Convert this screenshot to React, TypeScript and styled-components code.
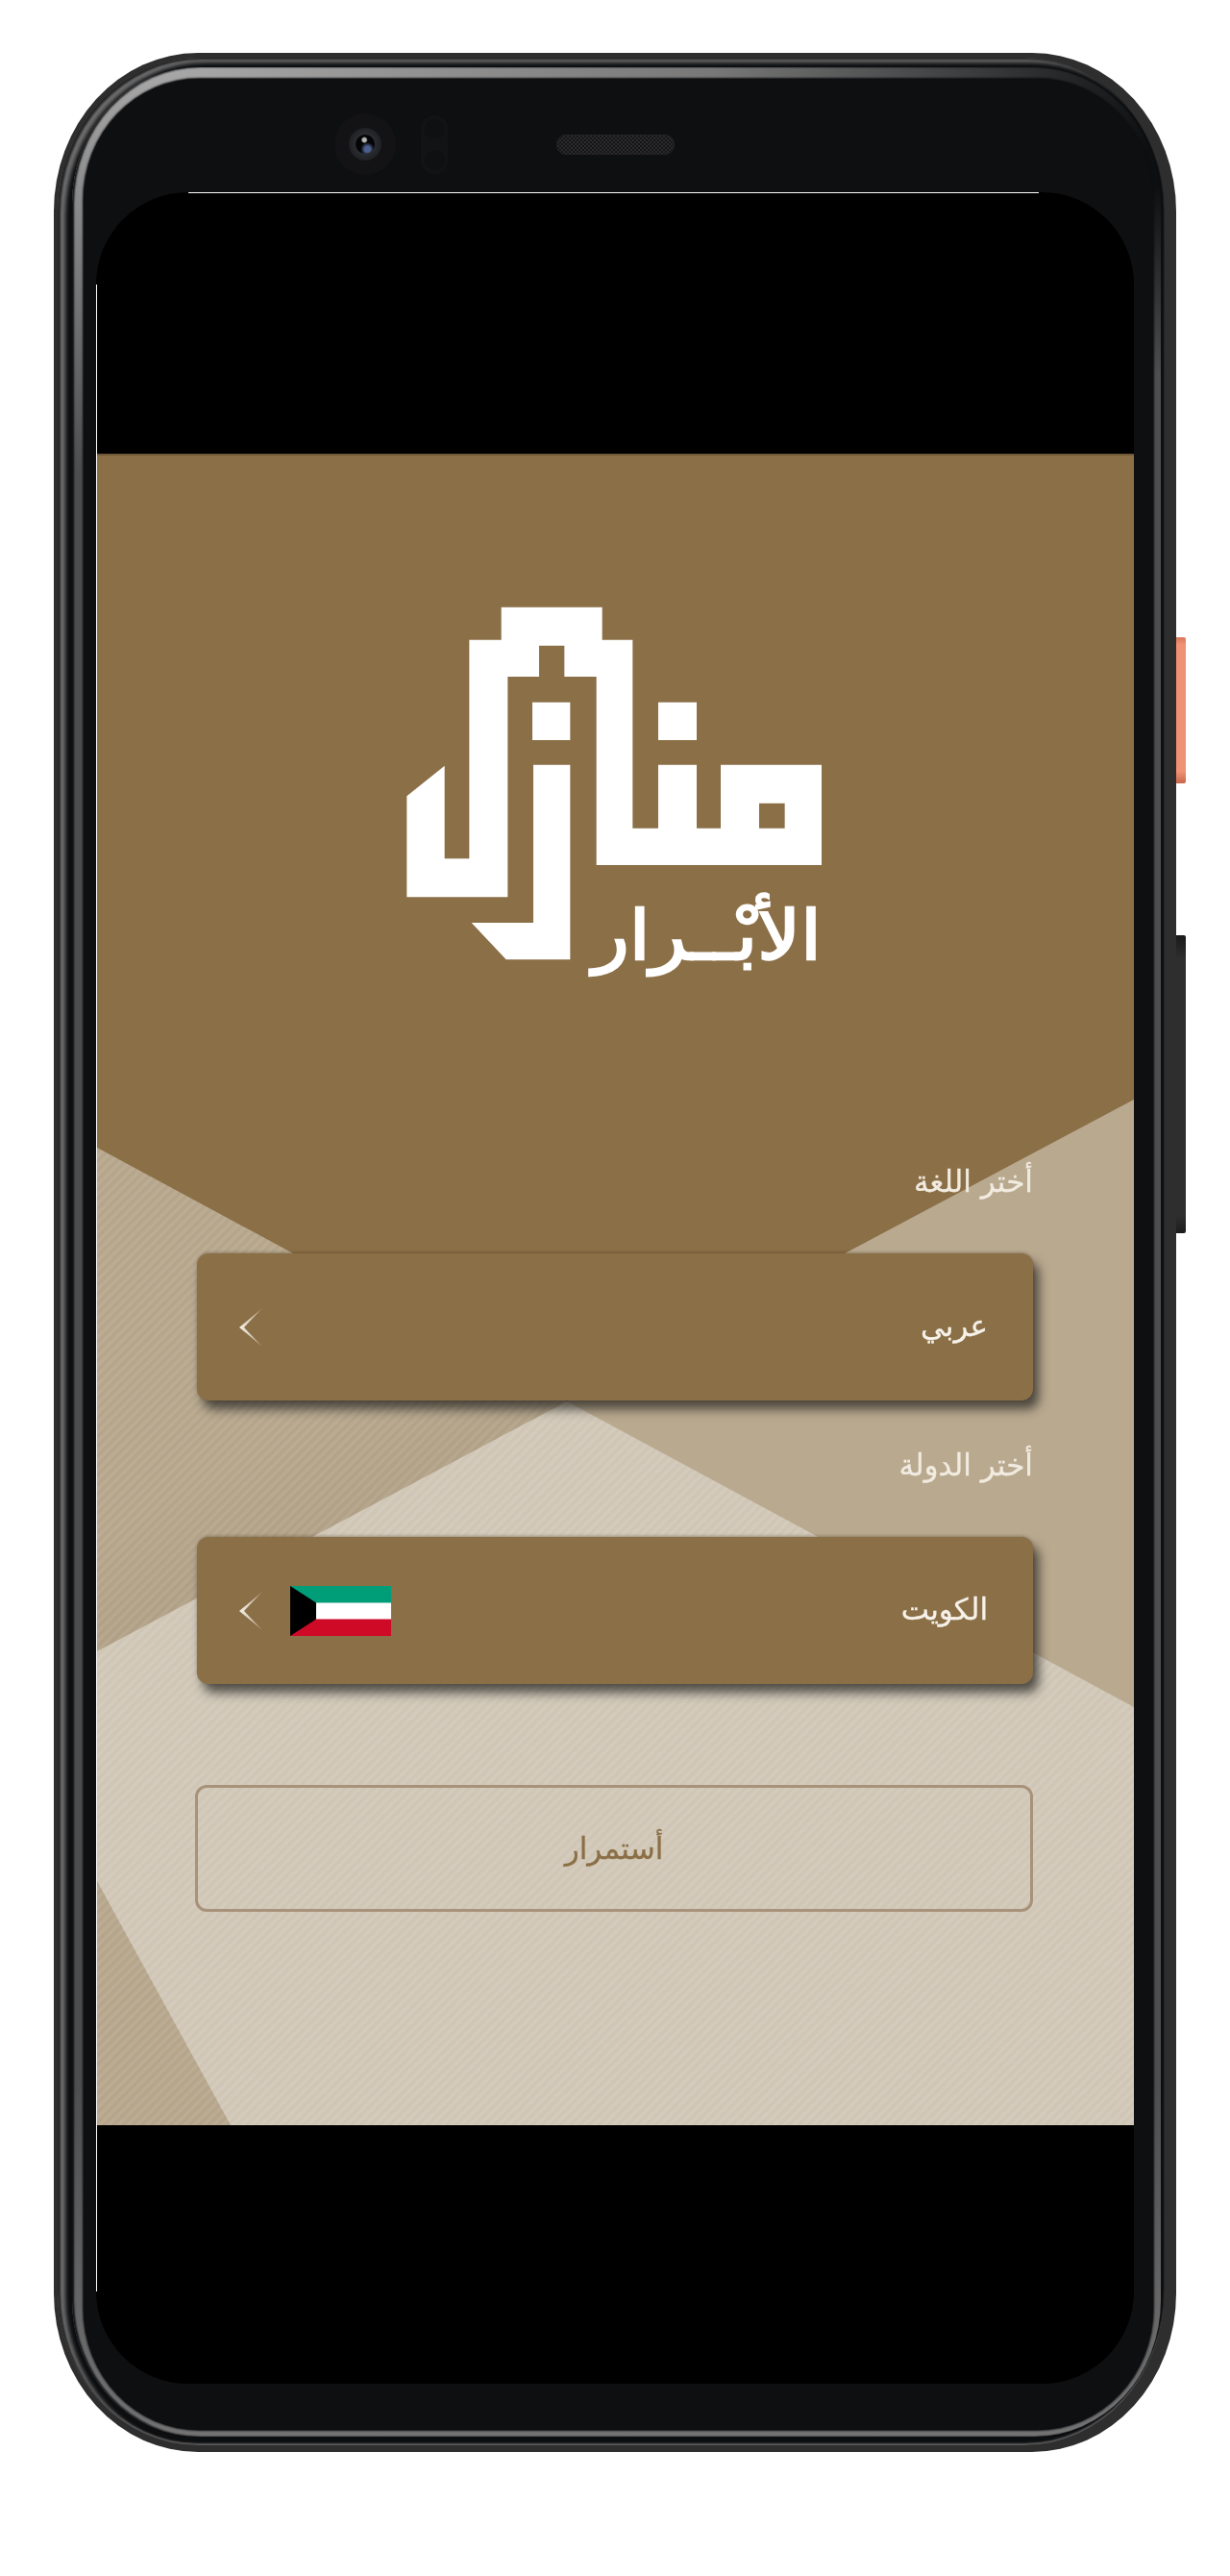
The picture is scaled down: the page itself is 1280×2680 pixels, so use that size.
import styled, { createGlobalStyle } from "styled-components";

const GlobalStyle = createGlobalStyle`
  html, body {
    margin: 0;
    padding: 0;
    background: #fff;
  }
  * {
    box-sizing: border-box;
  }
`;

const Page = styled.div`
  width: 1280px;
  height: 2680px;
  padding: 55px 0 0 56px;
  font-family: "DejaVu Sans", "Noto Sans", sans-serif;
`;

const PhoneBody = styled.div`
  position: relative;
  width: 1168px;
  height: 2496px;
  padding: 5px 12px 7px 4px;
  border-radius: 150px / 165px;
  background: #2e2e2e;
`;

const SideButton = styled.div<{ $top: number; $height: number; $orange?: boolean }>`
  position: absolute;
  top: ${(p) => p.$top}px;
  right: -10px;
  width: 10px;
  height: ${(p) => p.$height}px;
  border-radius: 0 2px 2px 0;
  background: ${(p) =>
    p.$orange
      ? "linear-gradient(#d9765a, #f09274 5%, #f09274 92%, #c9654a)"
      : "linear-gradient(#1a1a1a, #2e2e2e 8%, #2e2e2e 94%, #1c1c1c)"};
`;

const OuterRim = styled.div`
  height: 100%;
  padding: 10px 4px 9px 15px;
  border-radius: 146px / 160px;
  background: #0d0e10;
  box-shadow:
    inset 3px 2px 2px #262626,
    inset 8px 5px 4px #707070,
    inset 0 -2px 2px #5e5e5e;
`;

const InnerRim = styled.div`
  height: 100%;
  padding: 12px 8px 7px 12px;
  border-radius: 132px / 142px;
  background:
    radial-gradient(ellipse 1050px 420px at 8% 0, #a8a8a8 0, #787878 55%, transparent 100%),
    linear-gradient(#0e0f11 0, #0e0f11 5%, transparent 13%) right / 50% 100% no-repeat,
    linear-gradient(#4e4e4e, #4e4e4e 85%, #747474);
  box-shadow: inset 2px 0 2px #0e0f11;
`;

const Bezel = styled.div`
  display: flex;
  flex-direction: column;
  height: 100%;
  border-radius: 120px / 126px;
  background: #0e0f11;
  box-shadow: 0 0 2px 1px #0e0f11;
`;

const TopBar = styled.div`
  display: flex;
  align-items: center;
  height: 118px;
  padding: 18px 0 0 261px;
`;

const CameraHousing = styled.div`
  display: flex;
  align-items: center;
  justify-content: center;
  width: 64px;
  height: 64px;
  border-radius: 50%;
  background: #131315;
`;

const CameraRing = styled.div`
  display: flex;
  align-items: center;
  justify-content: center;
  width: 34px;
  height: 34px;
  border-radius: 50%;
  background: radial-gradient(circle, #2c2d31 40%, #131417 100%);
`;

const CameraLens = styled.div`
  width: 20px;
  height: 20px;
  border-radius: 50%;
  background:
    radial-gradient(circle at 46% 28%, #b5b5b5 0 2px, transparent 3.5px),
    radial-gradient(circle at 62% 76%, #4d5f8e 0 3px, transparent 7px),
    #050506;
`;

const SensorPill = styled.div`
  display: flex;
  flex-direction: column;
  align-items: center;
  justify-content: space-between;
  width: 28px;
  height: 61px;
  margin-left: 26px;
  padding: 4px 0;
  border-radius: 14px;
  background: #121315;
`;

const Sensor = styled.div`
  width: 21px;
  height: 21px;
  border-radius: 50%;
  background: #0f1012;
`;

const Speaker = styled.div`
  width: 123px;
  height: 21px;
  margin-left: 113px;
  border: 1px solid #232325;
  border-radius: 10px;
  background: repeating-conic-gradient(#2b2b2d 0 25%, #141416 0 50%) 0 0 / 4px 4px;
`;

const Screen = styled.div`
  width: 1080px;
  height: 2280px;
  margin-left: 13px;
  padding: 272px 0 269px 1px;
  border-radius: 96px;
  background:
    linear-gradient(#fff, #fff) 96px 0 / 885px 1px no-repeat,
    linear-gradient(#fff, #fff) 0 96px / 1px 2088px no-repeat,
    #000;
`;

const AppView = styled.main`
  position: relative;
  height: 1739px;
  padding: 128px 1px 0 0;
  overflow: hidden;
  direction: rtl;
`;

const Backdrop = styled.svg`
  position: absolute;
  top: 0;
  left: 0;
  width: 1079px;
  height: 1739px;
`;

const LogoMark = styled.svg`
  position: relative;
  display: block;
  width: 520px;
  height: 440px;
  margin: 0 auto;
  filter: blur(0.5px);
`;

const Wordmark = styled.text`
  font-family: "DejaVu Sans", sans-serif;
  font-size: 215px;
  fill: #fff;
  stroke: #fff;
  stroke-width: 7px;
  direction: rtl;
`;

const Form = styled.div`
  position: relative;
  display: flex;
  flex-direction: column;
  width: 870px;
  margin: 169px auto 0;
`;

const Label = styled.label`
  height: 40px;
  margin-bottom: 55px;
  font-size: 31px;
  line-height: 40px;
  color: #f1ebe0;
  -webkit-text-stroke: 0.3px #f1ebe0;
  filter: blur(0.4px);
`;

const Select = styled.div`
  display: flex;
  align-items: center;
  height: 153px;
  margin-bottom: 47px;
  padding: 0 47px 0 44px;
  border-radius: 12px;
  background: #8b6f47;
  box-shadow:
    0 -1px 3px rgba(70, 55, 30, 0.35),
    6px 9px 11px rgba(35, 33, 30, 0.72);
`;

const Value = styled.span`
  margin: 0 0 4px auto;
  font-size: 31px;
  color: #f6f2ea;
  -webkit-text-stroke: 0.3px #f6f2ea;
  filter: blur(0.4px);
`;

const Flag = styled.svg`
  display: block;
  width: 105px;
  height: 52px;
  margin-left: 29px;
`;

const Chevron = styled.svg`
  display: block;
  width: 24px;
  height: 40px;
  filter: blur(0.4px);
`;

const ContinueButton = styled.button`
  height: 132px;
  margin: 58px 0 0 -2px;
  border: 3px solid #a8927a;
  border-radius: 12px;
  background: transparent;
  font-family: inherit;
  font-size: 31px;
  color: #8b6f47;
  -webkit-text-stroke: 0.3px #8b6f47;
  filter: blur(0.4px);
`;

function Hatch({ id, base, stripe }: { id: string; base: string; stripe: string }) {
  return (
    <pattern id={id} width="7" height="7" patternUnits="userSpaceOnUse" patternTransform="rotate(45)">
      <rect width="7" height="7" fill={base} />
      <rect width="3.5" height="7" fill={stripe} />
    </pattern>
  );
}

function ChevronIcon({ id }: { id: string }) {
  return (
    <Chevron viewBox="0 0 24 40" aria-hidden="true">
      <defs>
        <linearGradient id={id} x1="0" x2="1" y1="0.5" y2="0.5">
          <stop offset="0" stopColor="#f8f4ec" />
          <stop offset="1" stopColor="#f4efe6" stopOpacity="0.35" />
        </linearGradient>
      </defs>
      <polygon points="24,0 0,20 24,40 5,20" fill={`url(#${id})`} />
    </Chevron>
  );
}

export default function App() {
  return (
    <>
      <GlobalStyle />
      <Page>
        <PhoneBody>
          <SideButton $top={608} $height={152} $orange />
          <SideButton $top={918} $height={310} />
          <OuterRim>
            <InnerRim>
              <Bezel>
                <TopBar>
                  <CameraHousing>
                    <CameraRing>
                      <CameraLens />
                    </CameraRing>
                  </CameraHousing>
                  <SensorPill>
                    <Sensor />
                    <Sensor />
                  </SensorPill>
                  <Speaker />
                </TopBar>
                <Screen>
                  <AppView>
                    <Backdrop viewBox="101 472 1079 1739" aria-hidden="true">
                      <defs>
                        <Hatch id="hatchLight" base="#d4cbbc" stripe="#cfc6b6" />
                        <Hatch id="hatchTan" base="#bbac93" stripe="#b4a58b" />
                        <linearGradient id="leftShade" x1="0.45" y1="0.2" x2="0.75" y2="0.85">
                          <stop offset="0.45" stopColor="#5d4a2c" stopOpacity="0" />
                          <stop offset="1" stopColor="#5d4a2c" stopOpacity="0.1" />
                        </linearGradient>
                      </defs>
                      <rect x="101" y="472" width="1079" height="1739" fill="url(#hatchLight)" />
                      <polygon points="590,1458 101,1194 101,1718" fill="url(#hatchTan)" />
                      <polygon points="590,1458 101,1194 101,1718" fill="url(#leftShade)" />
                      <polygon points="590,1458 1180,1144 1180,1776" fill="#b9a98f" />
                      <polygon points="101,1957 240,2211 101,2211" fill="url(#hatchTan)" />
                      <polygon points="101,472 1180,472 1180,1144 590,1458 101,1194" fill="#8b6f47" />
                      <rect x="101" y="472" width="1079" height="2" fill="#6f5936" />
                    </Backdrop>
                    <LogoMark viewBox="0 0 1560 1320" role="img" aria-label="منازل الأبرار">
                      <path
                        fill="#fff"
                        fillRule="evenodd"
                        d="M130 685 248 590V880H325V197H425V95H740V197H835V785H915V587H1035V785H1110V587H1425V900H722V312H622V215H543V312H445V1000H130ZM1230 707V785H1310V707Z"
                      />
                      <rect x="522" y="392" width="118" height="118" fill="#fff" />
                      <rect x="915" y="392" width="120" height="118" fill="#fff" />
                      <polygon points="525,587 640,587 640,1195 440,1195 332,1080 525,1080" fill="#fff" />
                      <Wordmark x="1425" y="1195" textAnchor="start" textLength="715" lengthAdjust="spacingAndGlyphs">
                        الأبْــرار
                      </Wordmark>
                    </LogoMark>
                    <Form>
                      <Label>أختر اللغة</Label>
                      <Select>
                        <Value>عربي</Value>
                        <ChevronIcon id="chevronLanguage" />
                      </Select>
                      <Label>أختر الدولة</Label>
                      <Select>
                        <Value>الكويت</Value>
                        <Flag viewBox="0 0 105 52" aria-hidden="true">
                          <rect width="105" height="18" fill="#009e78" />
                          <rect y="17.5" width="105" height="17.5" fill="#fff" />
                          <rect y="34.5" width="105" height="17.5" fill="#ce0a26" />
                          <polygon points="0,0 27,17.5 27,34.5 0,52" fill="#000" />
                        </Flag>
                        <ChevronIcon id="chevronCountry" />
                      </Select>
                      <ContinueButton type="button">أستمرار</ContinueButton>
                    </Form>
                  </AppView>
                </Screen>
              </Bezel>
            </InnerRim>
          </OuterRim>
        </PhoneBody>
      </Page>
    </>
  );
}
